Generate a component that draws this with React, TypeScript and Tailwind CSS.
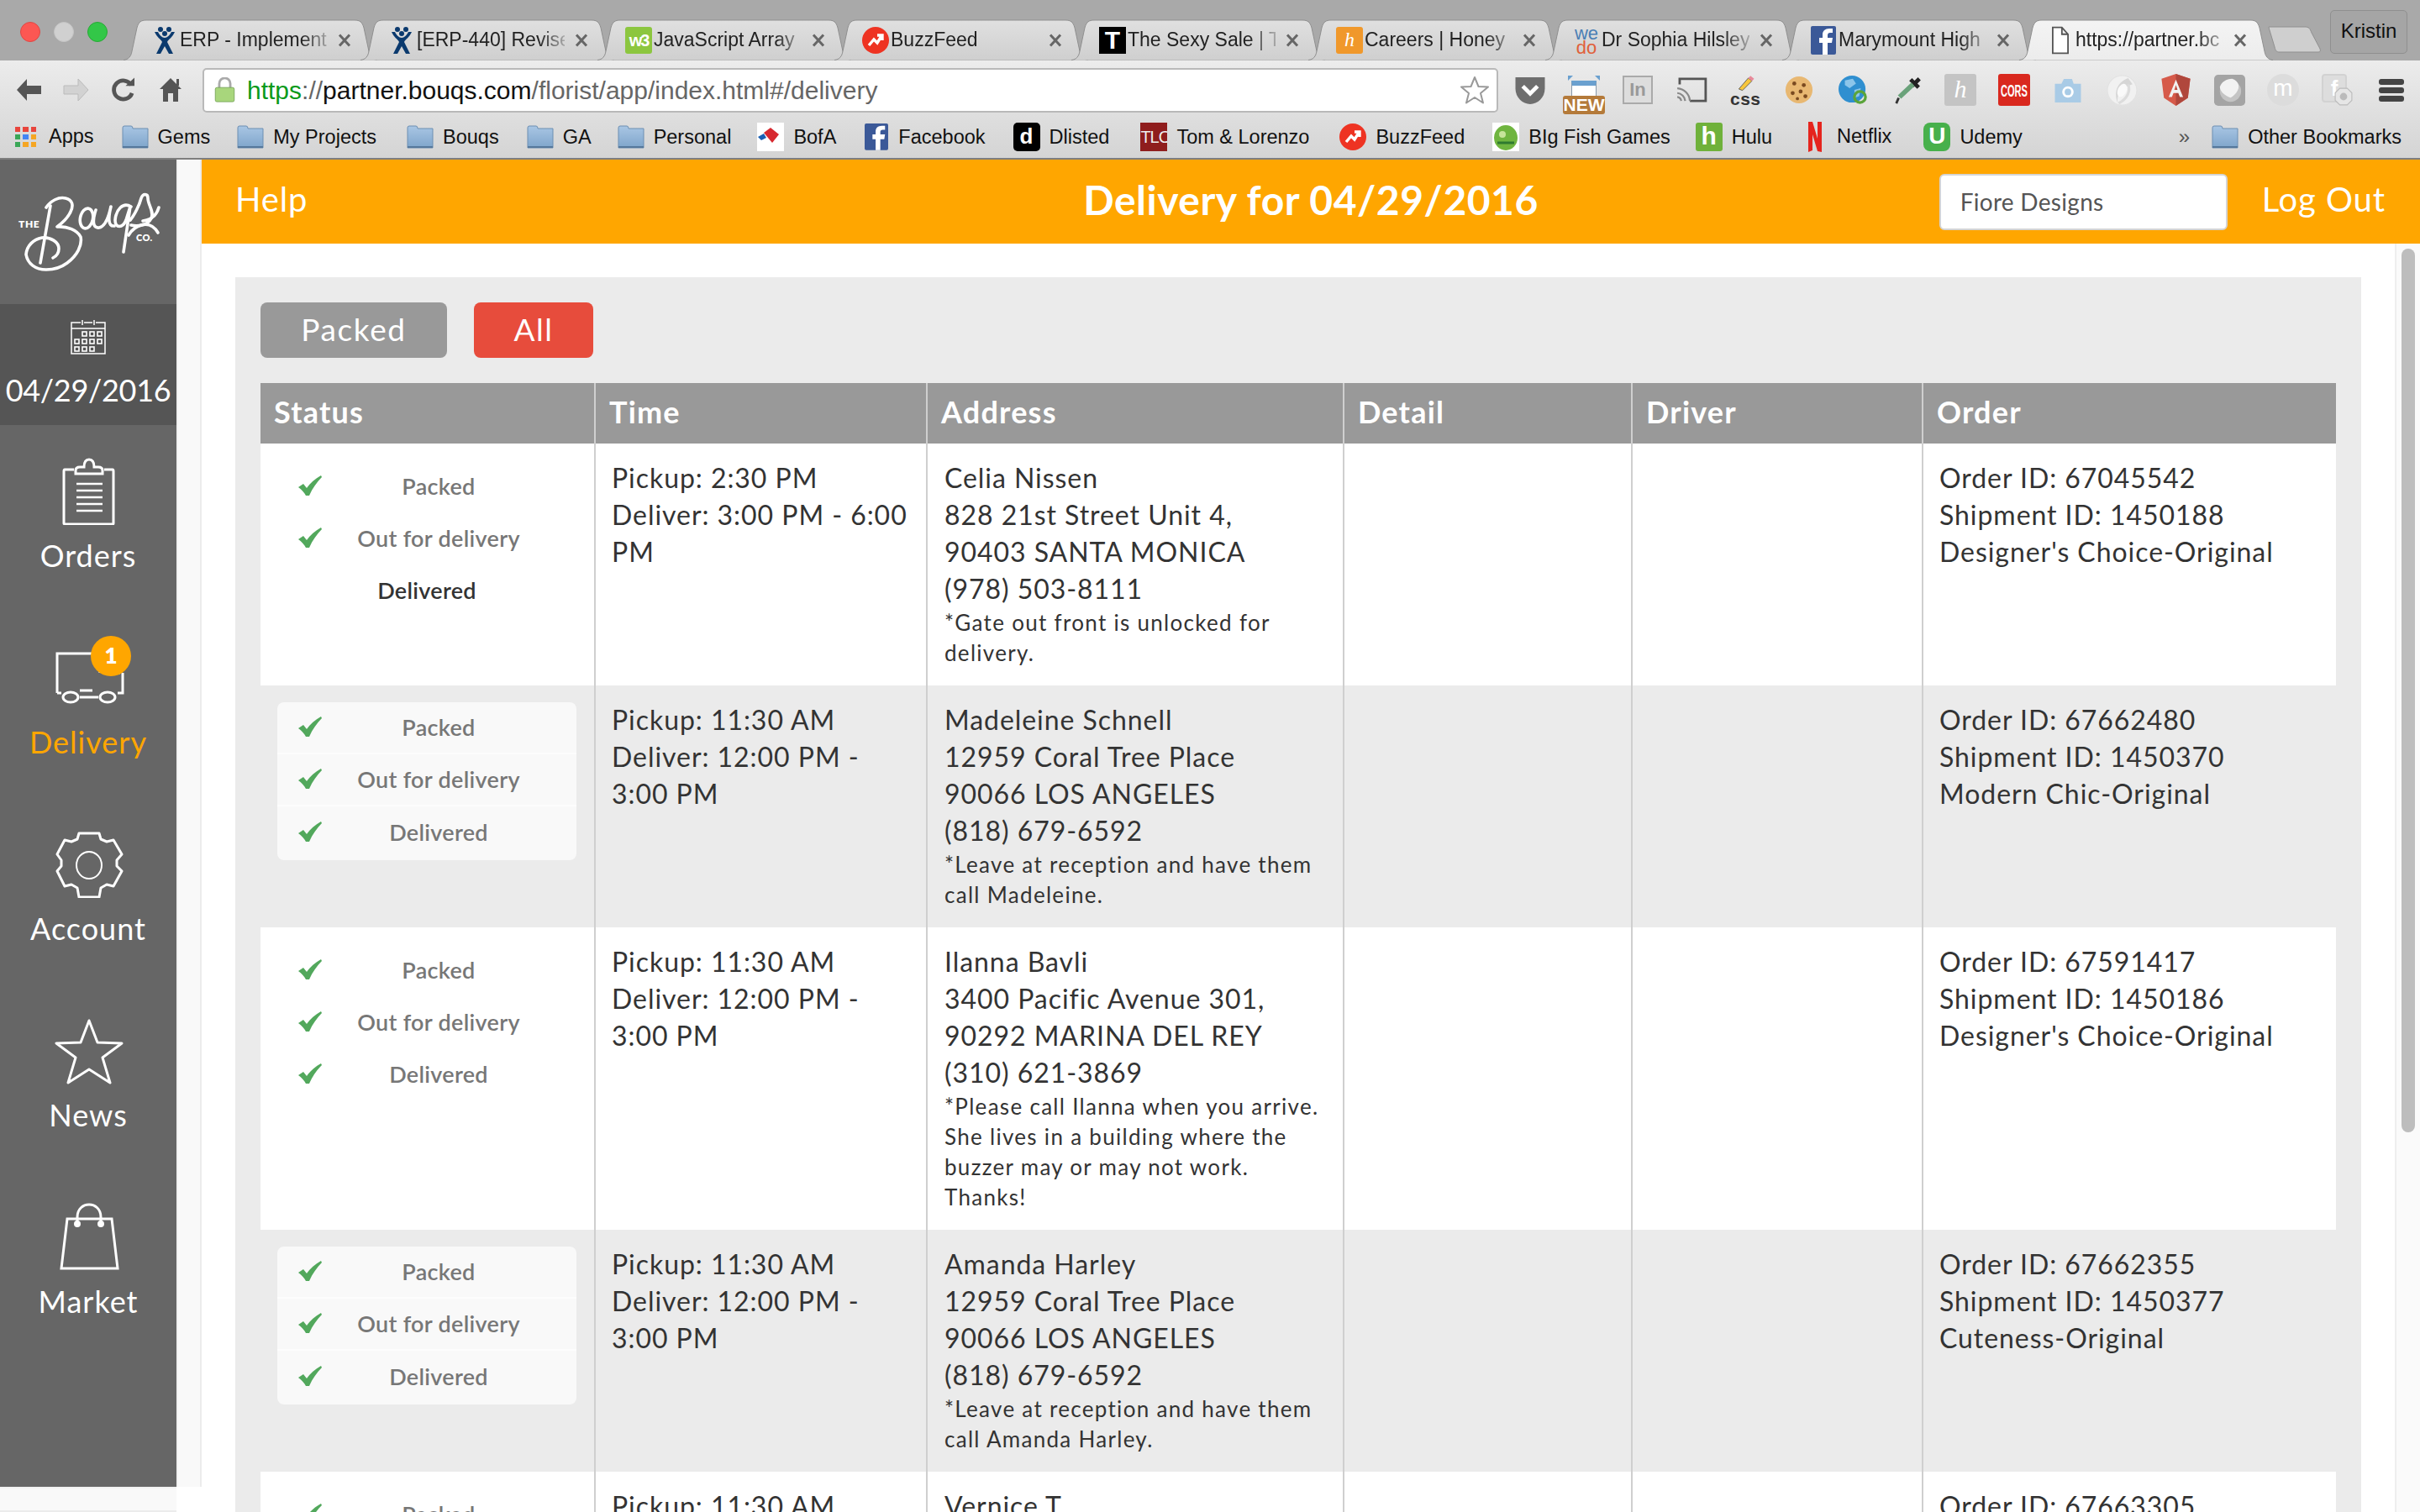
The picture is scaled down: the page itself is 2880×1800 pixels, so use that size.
import React from "react";

const FONT = "font-['Lato','Liberation_Sans',sans-serif]";
const UI = "font-['Liberation_Sans',sans-serif]";

/* ---------- favicons ---------- */
const Jira = () => (
  <svg viewBox="0 0 26 34" className="w-[26px] h-[34px]">
    <circle cx="8" cy="4" r="3" fill="#0b3a6e" />
    <circle cx="18" cy="4" r="3" fill="#0b3a6e" />
    <circle cx="13" cy="9" r="3" fill="#0b3a6e" />
    <path d="M1 7 C4 14 8 15 10 19 L3 33 L8 33 L13 24 L18 33 L23 33 L16 19 C18 15 22 14 25 7 L21 7 C19 11 16 14 13 14 C10 14 7 11 5 7Z" fill="#0b3a6e" />
  </svg>
);
const W3 = () => (
  <span className="w-[32px] h-[32px] rounded-[3px] bg-[#8cc63f] text-white text-[20px] font-bold leading-[32px] text-center tracking-[-2px] block">w3</span>
);
const Buzz = () => (
  <svg viewBox="0 0 32 32" className="w-[32px] h-[32px] block">
    <circle cx="16" cy="16" r="16" fill="#ee3322" />
    <path d="M8 22 L14 15 L18 19 L23 11 M18 10 L24 10 L24 16" stroke="#fff" strokeWidth="3.4" fill="none" />
  </svg>
);
const TBox = () => (
  <span className="w-[32px] h-[32px] bg-black text-white text-[30px] font-bold leading-[32px] text-center block">T</span>
);
const Honey = () => (
  <span className="w-[32px] h-[32px] rounded-[3px] bg-[#f0982b] text-white text-[24px] italic leading-[30px] text-center block font-['Liberation_Serif',serif]">h</span>
);
const WeDo = () => (
  <span className="w-[32px] h-[34px] text-[22px] leading-[17px] text-center block">
    <span className="text-[#4a7fb5] block">we</span>
    <span className="text-[#e0603a] block">do</span>
  </span>
);
const Fb = ({ s = 30 }: { s?: number }) => (
  <svg viewBox="0 0 30 34" className="block" style={{ width: s, height: (s * 34) / 30 }}>
    <rect width="30" height="34" rx="2" fill="#3b5998" />
    <path d="M20 34 V20 H25 L26 14 H20 V11 C20 9 21 8 23 8 H26 V3 H22 C17 3 14 6 14 10 V14 H10 V20 H14 V34Z" fill="#fff" />
  </svg>
);
const Doc = () => (
  <svg viewBox="0 0 22 36" className="w-[20px] h-[36px] block">
    <path d="M1 1 H13 L21 10 V35 H1Z M13 1 V10 H21" fill="#fff" stroke="#555" strokeWidth="2" />
  </svg>
);
const Folder = () => (
  <svg viewBox="0 0 32 28" className="w-[32px] h-[28px] block shrink-0">
    <defs>
      <linearGradient id="fold" x1="0" y1="0" x2="0" y2="1">
        <stop offset="0" stopColor="#a9c6e4" />
        <stop offset="1" stopColor="#7fa5cb" />
      </linearGradient>
    </defs>
    <path d="M1 3 Q1 1 3 1 H11 Q13 1 13 4 H31 V27 H1Z" fill="url(#fold)" stroke="#6d8fb2" strokeWidth="1" />
    <rect x="1" y="25" width="30" height="2" fill="#55789c" />
  </svg>
);
const Apps = () => {
  const c = ["#e8453c", "#e8453c", "#e8453c", "#3aa757", "#4285f4", "#f5a623", "#3aa757", "#f5a623", "#f5a623"];
  return (
    <span className="grid grid-cols-3 gap-[3px] w-[25px] shrink-0">
      {c.map((b, i) => (
        <span key={i} className="h-[6px] block" style={{ background: b }} />
      ))}
    </span>
  );
};

/* ---------- tab ---------- */
const tabs = [
  { icon: <Jira />, t: "ERP - Implement" },
  { icon: <Jira />, t: "[ERP-440] Revise" },
  { icon: <W3 />, t: "JavaScript Array" },
  { icon: <Buzz />, t: "BuzzFeed" },
  { icon: <TBox />, t: "The Sexy Sale | T" },
  { icon: <Honey />, t: "Careers | Honey" },
  { icon: <WeDo />, t: "Dr Sophia Hilsley" },
  { icon: <Fb />, t: "Marymount High" },
];

function Tab({ icon, t, active }: { icon: React.ReactNode; t: string; active?: boolean }) {
  return (
    <div className="relative w-[302px] h-[49px] -mr-[20px] shrink-0 flex items-center pl-[33px] pr-[31px]">
      <svg viewBox="0 0 302 49" className="absolute inset-0 w-full h-full" preserveAspectRatio="none">
        <defs>
          <linearGradient id="tabA" x1="0" y1="0" x2="0" y2="1">
            <stop offset="0" stopColor="#f4f4f4" />
            <stop offset="1" stopColor="#ececec" />
          </linearGradient>
          <linearGradient id="tabI" x1="0" y1="0" x2="0" y2="1">
            <stop offset="0" stopColor="#e0e0e0" />
            <stop offset="1" stopColor="#cfcfcf" />
          </linearGradient>
        </defs>
        <path
          d="M0 48.5 C6 48 9 44 10 38 L16 10 C18 3 21 1 27 1 H275 C281 1 284 3 286 10 L292 38 C293 44 296 48 302 48.5"
          fill={active ? "url(#tabA)" : "url(#tabI)"}
          stroke="#8f8f8f"
          strokeWidth="1"
        />
      </svg>
      <span className="relative w-[32px] h-[34px] shrink-0 flex items-center justify-center">{icon}</span>
      <span className={`relative ml-[2px] flex-1 overflow-hidden whitespace-nowrap text-[23px] text-[#222] ${UI} [mask-image:linear-gradient(to_right,black_82%,rgba(0,0,0,0.25))]`}>
        {t}
      </span>
      <span className="relative w-[16px] ml-[12px] shrink-0">
        <svg viewBox="0 0 16 16" className="w-[16px] h-[16px] block">
          <path d="M2 1.5 L14 14.5 M14 1.5 L2 14.5" stroke="#666" strokeWidth="3" />
        </svg>
      </span>
    </div>
  );
}

/* ---------- toolbar ---------- */
function Extensions() {
  return (
    <div className="flex items-center ml-[19px]">
      <svg viewBox="0 0 38 36" className="w-[38px] h-[35px] shrink-0">
        <path d="M1 2 H37 V16 C37 27 28 35 19 35 C10 35 1 27 1 16Z" fill="#6e6e6e" />
        <path d="M10 13 L19 22 L28 13" stroke="#fff" strokeWidth="5" fill="none" />
      </svg>
      <span className="relative w-[50px] h-[46px] ml-[20px] mt-[12px] shrink-0">
        <span className="absolute left-[6px] top-0 w-0 h-0 border-l-[6px] border-l-[#6aa0cf] border-b-[6px] border-b-transparent" />
        <span className="absolute right-[6px] top-0 w-0 h-0 border-r-[6px] border-r-[#6aa0cf] border-b-[6px] border-b-transparent" />
        <span className="absolute left-[10px] top-[6px] w-[30px] h-[20px] bg-white border border-[#89a] border-t-[6px] border-t-[#6aa0cf]" />
        <span className="absolute left-0 bottom-0 w-[50px] h-[22px] bg-[#b47a3a] rounded-[3px] text-white text-[21px] font-bold leading-[22px] text-center">NEW</span>
      </span>
      <span className="w-[36px] h-[34px] ml-[21px] border-2 border-[#aaa] bg-[#ddd] text-[#999] text-[22px] leading-[30px] text-center shrink-0 font-bold">In</span>
      <svg viewBox="0 0 40 32" className="w-[38px] h-[30px] shrink-0 ml-[27px]">
        <path d="M5 9 V2 H38 V30 H18" stroke="#555" strokeWidth="3" fill="none" />
        <path d="M2 14 A17 17 0 0 1 18 30 M2 20 A11 11 0 0 1 12 30 M2 25 A6 6 0 0 1 7 30" stroke="#888" strokeWidth="2.4" fill="none" />
      </svg>
      <span className="relative w-[36px] h-[36px] shrink-0 ml-[27px]">
        <svg viewBox="0 0 30 20" className="absolute left-[6px] top-0 w-[26px] h-[20px]">
          <path d="M5 18 L18 3 L23 7 L10 20Z" fill="#f7c63c" stroke="#555" strokeWidth="1" />
          <path d="M18 3 L21 0 L26 4 L23 7Z" fill="#e88a9a" />
        </svg>
        <span className="absolute left-0 bottom-[-2px] w-[36px] text-center text-[21px] font-bold text-[#333] leading-[18px] tracking-[0.5px]">css</span>
      </span>
      <svg viewBox="0 0 36 36" className="w-[34px] h-[34px] shrink-0 ml-[29px]">
        <circle cx="18" cy="18" r="17" fill="#e8b872" />
        <circle cx="12" cy="10" r="2.5" fill="#7a4a20" />
        <circle cx="24" cy="12" r="2.5" fill="#7a4a20" />
        <circle cx="10" cy="22" r="2.5" fill="#7a4a20" />
        <circle cx="20" cy="20" r="2.5" fill="#7a4a20" />
        <circle cx="26" cy="26" r="2.5" fill="#7a4a20" />
        <circle cx="16" cy="29" r="2" fill="#7a4a20" />
      </svg>
      <svg viewBox="0 0 36 36" className="w-[36px] h-[34px] shrink-0 ml-[29px]">
        <circle cx="17" cy="17" r="17" fill="#2f8fd0" />
        <path d="M8 6 L18 4 L22 10 L14 16 L8 12Z M20 18 L28 16 L26 26 L20 28Z" fill="#8cc5ea" />
        <circle cx="27" cy="27" r="7" fill="none" stroke="#5aa43a" strokeWidth="3.5" />
      </svg>
      <svg viewBox="0 0 36 38" className="w-[36px] h-[36px] shrink-0 ml-[29px]">
        <path d="M24 14 L33 5 M22 6 L32 16" stroke="#222" strokeWidth="5" />
        <path d="M25 12 L8 28" stroke="#6aa27a" strokeWidth="6" />
        <path d="M7 29 L4 36" stroke="#333" strokeWidth="3" />
      </svg>
      <span className="w-[38px] h-[38px] bg-[#c4c4c4] rounded-[3px] text-white text-[30px] leading-[36px] italic text-center shrink-0 ml-[26px] font-['Liberation_Serif',serif]">h</span>
      <svg viewBox="0 0 38 38" className="w-[38px] h-[38px] shrink-0 ml-[26px]">
        <rect width="38" height="38" rx="3" fill="#d9281e" />
        <text x="3" y="27" fontSize="21" fontWeight="700" fill="#fff" textLength="32" lengthAdjust="spacingAndGlyphs" fontFamily="Liberation Sans">CORS</text>
      </svg>
      <svg viewBox="0 0 34 32" className="w-[34px] h-[31px] shrink-0 ml-[28px]">
        <path d="M1 8 H9 L12 2 H22 L24 8 H33 V31 H1Z" fill="#a9cbe6" />
        <circle cx="17" cy="18" r="7" fill="#fff" />
        <circle cx="17" cy="18" r="4" fill="#a9cbe6" />
      </svg>
      <svg viewBox="0 0 36 36" className="w-[37px] h-[37px] shrink-0 ml-[29px]">
        <circle cx="18" cy="18" r="17" fill="#f1f1f1" stroke="#e2e2e2" />
        <path d="M25 4 C12 9 8 20 13 33 C11 23 17 15 30 11Z" fill="#d6d6d6" />
        <path d="M25 11 C28 19 24 28 14 33" stroke="#dcdcdc" strokeWidth="3" fill="none" />
        <ellipse cx="18" cy="18" rx="5" ry="8" fill="#fafafa" transform="rotate(25 18 18)" />
      </svg>
      <svg viewBox="0 0 36 40" className="w-[35px] h-[38px] shrink-0 ml-[28px]">
        <path d="M18 0 L36 6 L33 30 L18 40 L3 30 L0 6Z" fill="#d65a4a" />
        <path d="M18 0 L36 6 L33 30 L18 40Z" fill="#b0473c" />
        <path d="M18 7 L9 29 H13 L15 24 H21 L23 29 H27Z M16 20 L18 14 L20 20Z" fill="#f2f2f2" />
      </svg>
      <svg viewBox="0 0 38 38" className="w-[37px] h-[37px] shrink-0 ml-[28px]">
        <rect width="38" height="38" rx="5" fill="#a4a4a4" />
        <circle cx="20" cy="20" r="13" fill="#c4c4c4" />
        <path d="M22 5 C31 8 32 16 27 22 C24 26 20 28 20 28 C13 26 7 20 7 15 C9 9 15 5 22 5Z" fill="#f2f2f2" />
      </svg>
      <span className="w-[38px] h-[38px] rounded-full bg-[#dcdcdc] text-white text-[28px] leading-[34px] text-center shrink-0 ml-[26px]">m</span>
      <span className="relative w-[37px] h-[38px] shrink-0 ml-[27px]">
        <span className="absolute left-0 top-0 w-[30px] h-[34px] rounded-[4px] bg-[#ddd] border-2 border-[#d2d2d2] text-white text-[26px] font-bold leading-[30px] text-center">f</span>
        <svg viewBox="0 0 20 20" className="absolute right-0 bottom-0 w-[22px] h-[22px]">
          <path d="M6 1 H14 L19 6 V14 L14 19 H6 L1 14 V6Z" fill="#e6e6e6" stroke="#bbb" />
          <circle cx="10" cy="10" r="4" fill="#bbb" />
        </svg>
      </span>
      <span className="flex flex-col gap-[3px] w-[30px] shrink-0 ml-[31px]">
        <span className="h-[7px] rounded-[3px] bg-[#444] block" />
        <span className="h-[7px] rounded-[3px] bg-[#444] block" />
        <span className="h-[7px] rounded-[3px] bg-[#444] block" />
      </span>
    </div>
  );
}

const Bm = ({ icon, t, w, cls = "" }: { icon: React.ReactNode; t: string; w?: number; cls?: string }) => (
  <span className={`flex items-center shrink-0 gap-[11px] ${cls}`}>
    <span className="flex items-center justify-center shrink-0" style={{ width: w ?? 32 }}>{icon}</span>
    <span className="text-[23.5px] text-[#111] whitespace-nowrap leading-[32px]">{t}</span>
  </span>
);

function Chrome() {
  return (
    <div className={`h-[190px] shrink-0 bg-[#a9a9a9] flex flex-col ${UI}`}>
      <div className="h-[72px] shrink-0 flex items-end pl-[147px] relative">
        <div className="flex items-end">
          {tabs.map((t, i) => (
            <Tab key={i} icon={t.icon} t={t.t} />
          ))}
          <Tab icon={<Doc />} t="https://partner.bc" active />
        </div>
        <svg viewBox="0 0 66 32" className="w-[66px] h-[32px] self-start mt-[31px] ml-[14px] shrink-0">
          <path d="M1 1 H44 C49 1 50 3 52 8 L62 27 C63 30 62 31 60 31 H14 C10 31 9 29 8 25 L2 5 C1 2 1 1 1 1Z" fill="#cfcfcf" stroke="#8f8f8f" />
        </svg>
        <span className="absolute left-[2773px] top-[12px] w-[92px] h-[52px] rounded-[5px] bg-[#a5a5a5] border border-[#8f8f8f] text-[24px] text-[#111] text-center leading-[48px]">Kristin</span>
        <span className="absolute left-[24px] top-[26px] w-[24px] h-[24px] rounded-full bg-[#fc5753] border border-[#df4744]" />
        <span className="absolute left-[64px] top-[26px] w-[24px] h-[24px] rounded-full bg-[#d0d0d0] border border-[#c4c4c4]" />
        <span className="absolute left-[104px] top-[26px] w-[24px] h-[24px] rounded-full bg-[#33c748] border border-[#27aa35]" />
      </div>
      <div className="flex-1 bg-gradient-to-b from-[#ececec] to-[#d4d4d4] border-b-2 border-[#7e7e7e] flex flex-col">
        <div className="h-[66px] shrink-0 flex items-center pt-[4px]">
          <div className="flex items-center ml-[18px] shrink-0">
            <svg viewBox="0 0 32 30" className="w-[32px] h-[30px] block">
              <path d="M14 2 L2 15 L14 28 V20 H31 V10 H14Z" fill="#555" />
            </svg>
            <svg viewBox="0 0 32 30" className="w-[32px] h-[30px] block ml-[25px]">
              <path d="M18 2 L30 15 L18 28 V20 H1 V10 H18Z" fill="#d2d2d2" stroke="#bbb" />
            </svg>
            <svg viewBox="0 0 28 30" className="w-[27px] h-[30px] block ml-[26px]">
              <path d="M24 9 A11.5 11.5 0 1 0 25 19" fill="none" stroke="#555" strokeWidth="5" />
              <path d="M17 10 H28 V0Z" fill="#555" />
            </svg>
            <svg viewBox="0 0 26 30" className="w-[26px] h-[30px] block ml-[30px]">
              <path d="M13 1 L26 14 H22 V29 H16 V19 H10 V29 H4 V14 H0Z" fill="#555" />
              <rect x="20" y="2" width="3" height="8" fill="#555" />
            </svg>
          </div>
          <div className="ml-[25px] w-[1542px] h-[53px] shrink-0 rounded-[5px] bg-white border-2 border-[#b9b9b9] flex items-center pl-[12px] pr-[8px]">
            <svg viewBox="0 0 26 32" className="w-[25px] h-[30px] shrink-0">
              <path d="M6 14 V8 A7 7 0 0 1 20 8 V14" fill="none" stroke="#aaa" strokeWidth="3" />
              <rect x="1" y="13" width="24" height="18" rx="2" fill="#a8d67c" stroke="#7aa85a" />
            </svg>
            <span className="ml-[14px] text-[30px] text-[#666] whitespace-nowrap">
              <span className="text-[#0a9a1a]">https</span>:
              <span className="text-[#666]">//</span>
              <span className="text-[#111]">partner.bouqs.com</span>/florist/app/index.html#/delivery
            </span>
            <svg viewBox="0 0 36 34" className="w-[36px] h-[34px] ml-auto shrink-0">
              <path d="M18 2 L22.5 13 L34 13.5 L25 21 L28 32.5 L18 26 L8 32.5 L11 21 L2 13.5 L13.5 13Z" fill="#fff" stroke="#999" strokeWidth="2" strokeLinejoin="round" />
            </svg>
          </div>
          <Extensions />
        </div>
        <div className="flex-1 flex items-center gap-[33px] pl-[18px] pr-[22px]">
          <span className="flex items-center gap-[15px] shrink-0">
            <Apps />
            <span className="text-[23.5px] text-[#111]">Apps</span>
          </span>
          <Bm icon={<Folder />} t="Gems" />
          <Bm icon={<Folder />} t="My Projects" cls="-ml-[1px]" />
          <Bm icon={<Folder />} t="Bouqs" cls="ml-[3px]" />
          <Bm icon={<Folder />} t="GA" />
          <Bm icon={<Folder />} t="Personal" cls="-ml-[2px]" />
          <Bm
            icon={
              <svg viewBox="0 0 32 34" className="w-[32px] h-[34px]">
                <rect width="32" height="34" fill="#fff" />
                <path d="M8 12 L16 6 L26 14 L18 24Z" fill="#d7282f" />
                <path d="M1 17 L8 13 L11 18 L5 21Z" fill="#1a5fb4" />
              </svg>
            }
            t="BofA"
            cls="-ml-[2px]"
          />
          <Bm icon={<Fb s={28} />} t="Facebook" w={30} />
          <Bm
            icon={<span className="w-[32px] h-[34px] bg-black rounded-[5px] text-white text-[26px] font-bold leading-[32px] text-center block">d</span>}
            t="Dlisted"
          />
          <Bm
            icon={<span className="w-[32px] h-[34px] bg-[#8f1d1d] text-[#eee] text-[20px] leading-[34px] text-center block tracking-[-1px] overflow-hidden">TLO</span>}
            t="Tom & Lorenzo"
            cls="ml-[4px]"
          />
          <Bm icon={<Buzz />} t="BuzzFeed" cls="ml-[3px]" />
          <Bm
            icon={
              <svg viewBox="0 0 32 34" className="w-[32px] h-[34px]">
                <rect width="32" height="34" fill="#fff" />
                <ellipse cx="16" cy="18" rx="14" ry="15" fill="#6fb53f" />
                <circle cx="12" cy="14" r="4" fill="#c6e59a" />
                <path d="M6 24 H26" stroke="#2f7a2f" strokeWidth="3" />
              </svg>
            }
            t="BIg Fish Games"
          />
          <Bm
            icon={<span className="w-[32px] h-[34px] bg-[#6fb13a] rounded-[3px] text-white text-[30px] font-bold leading-[32px] text-center block">h</span>}
            t="Hulu"
            cls="-ml-[3px]"
          />
          <span className="flex items-center gap-[18px] shrink-0 ml-[10px]">
            <svg viewBox="0 0 16 36" className="w-[16px] h-[36px]">
              <path d="M0 0 H5 L11 20 V0 H16 V36 L11 35 L5 15 V34 L0 36Z" fill="#e5241d" />
            </svg>
            <span className="text-[23.5px] text-[#111]">Netflix</span>
          </span>
          <Bm
            icon={
              <span className="w-[32px] h-[34px] bg-[#47b04b] rounded-[8px] text-white text-[28px] font-bold leading-[32px] text-center block">U</span>
            }
            t="Udemy"
            cls="ml-[5px]"
          />
          <span className="ml-auto text-[24px] text-[#555] mr-[-5px]">»</span>
          <Bm icon={<Folder />} t="Other Bookmarks" cls="-ml-[2px]" />
        </div>
      </div>
    </div>
  );
}

/* ---------- sidebar ---------- */
const Logo = () => (
  <svg viewBox="0 0 210 172" className="w-[210px] h-[172px] block">
    <g fill="none" stroke="#fff" strokeWidth="3.6" strokeLinecap="round" strokeLinejoin="round">
      <path d="M48 123 C52 100 56 78 60 55" />
      <path d="M55 57 C60 49 70 44 78 46 C86 48 88 54 84 62 C81 69 76 74 68 80 C80 79 92 84 96 92 C98 102 92 114 80 123 C72 129 62 131 55 131 C42 131 33 124 31 113 C32 102 40 95 50 93 C60 92 70 98 70 106 C70 111 67 115 63 117" />
      <ellipse cx="103" cy="70" rx="7.5" ry="12" transform="rotate(12 103 70)" />
      <path d="M114 60 C110 72 110 82 118 81 C124 80 129 70 132 56 C129 68 128 80 136 79" />
      <path d="M156 56 C146 50 138 60 137 72 C137 82 146 82 150 72 L155 56 L147 110" />
      <path d="M155 72 C160 66 166 54 168 46 C170 40 176 40 176 46 C176 54 184 62 180 70 C176 78 164 80 156 78" />
      <path d="M189 57 C186 68 178 72 170 73" />
      <path d="M153 90 C160 78 178 70 188 87" />
    </g>
    <text x="22" y="81" fill="#fff" fontSize="12" fontWeight="800" fontFamily="Lato" letterSpacing="0.6">THE</text>
    <text x="162" y="97" fill="#fff" fontSize="11" fontWeight="800" fontFamily="Lato" letterSpacing="0.4">CO.</text>
  </svg>
);

const navSvg = "w-[100px] h-[96px] block mx-auto";
const IconOrders = () => (
  <svg viewBox="0 0 100 96" className={navSvg} fill="none" stroke="#fff" strokeWidth="3">
    <path d="M33 30 H22 Q21 30 21 32 V94 Q21 95 23 95 H79 Q80 95 80 94 V32 Q80 30 79 30 H69" />
    <path d="M35 35 V31 Q35 27 40 27 H45 Q45 18 51 18 Q57 18 57 27 H62 Q67 27 67 31 V35Z" />
    <path d="M36 47 H67 M36 55 H67 M36 63 H67 M36 71 H67 M36 79 H67" strokeWidth="2.4" />
  </svg>
);
const IconTruck = () => (
  <svg viewBox="0 0 100 96" className={navSvg} fill="none" stroke="#fff" strokeWidth="3">
    <path d="M13 74 V27 H57 M64 27 V50 M13 74 H18" />
    <path d="M70 36 H82 L86 50 H70Z" />
    <path d="M91 50 V74 H85" />
    <ellipse cx="29" cy="79" rx="9" ry="6" />
    <ellipse cx="73" cy="79" rx="9" ry="6" />
    <path d="M40 71 H55 M40 79 H62" />
  </svg>
);
const IconGear = () => (
  <svg viewBox="0 0 100 96" className={navSvg} fill="none" stroke="#fff" strokeWidth="3">
    <path d="M39 19 H63 L65 26 L72 29 L80 27 L90 44 L84 51 V58 L90 64 L80 82 L72 80 L65 84 L63 95 H39 L37 84 L30 80 L22 82 L13 64 L18 58 V51 L13 44 L22 27 L30 29 L37 26Z" strokeLinejoin="round" />
    <ellipse cx="51" cy="57" rx="15" ry="16" strokeWidth="2" />
  </svg>
);
const IconStar = () => (
  <svg viewBox="0 0 100 96" className={navSvg} fill="none" stroke="#fff" strokeWidth="3" strokeLinejoin="round">
    <path d="M51 20 L61 46 L90 47 L67 64 L76 94 L51 78 L26 94 L35 64 L12 47 L41 46Z" />
  </svg>
);
const IconBag = () => (
  <svg viewBox="0 0 100 96" className={navSvg} fill="none" stroke="#fff" strokeWidth="3">
    <path d="M25 34 H78 L85 93 H18Z" />
    <path d="M37 40 V32 C37 12 65 12 65 32 V40" />
    <circle cx="37" cy="40" r="2.5" fill="#fff" />
    <circle cx="65" cy="40" r="2.5" fill="#fff" />
  </svg>
);

const NavItem = ({ icon, label, active, badge }: { icon: React.ReactNode; label: string; active?: boolean; badge?: boolean }) => (
  <div className="h-[222px] pt-[23px] text-center relative">
    {icon}
    {badge && (
      <span className="absolute left-[108px] top-[29px] w-[48px] h-[48px] rounded-full bg-[#ffa600] text-white font-extrabold text-[26px] leading-[46px]">1</span>
    )}
    <div className={`mt-[14px] text-[36px] leading-[44px] tracking-[1px] ${active ? "text-[#ffa600]" : "text-white"}`}>{label}</div>
  </div>
);

function Sidebar() {
  return (
    <div className="w-[240px] shrink-0 flex flex-col">
      <div className="flex h-[1580px] shrink-0">
        <div className="w-[210px] bg-[#666] text-white">
          <Logo />
          <div className="h-[144px] bg-[#555] text-center pt-[18px]">
            <svg viewBox="0 0 42 42" className="w-[42px] h-[42px] mx-auto block" fill="none" stroke="#fff" strokeWidth="1.5">
              <path d="M12 4 H1 V41 H41 V4 H30 M16 4 H26 M14 1 V7 M28 1 V7 M1 11 H41" />
              {[
                [14, 15], [23, 15], [32, 15], [5, 24], [14, 24], [23, 24], [32, 24], [5, 33], [14, 33], [23, 33],
              ].map(([x, y], i) => (
                <rect key={i} x={x} y={y} width="5" height="5" strokeWidth="1.6" />
              ))}
            </svg>
            <div className="mt-[20px] text-[36px] leading-[44px] tracking-[-0.3px] whitespace-nowrap">04/29/2016</div>
          </div>
          <NavItem icon={<IconOrders />} label="Orders" />
          <NavItem icon={<IconTruck />} label="Delivery" active badge />
          <NavItem icon={<IconGear />} label="Account" />
          <NavItem icon={<IconStar />} label="News" />
          <NavItem icon={<IconBag />} label="Market" />
        </div>
        <div className="w-[30px] bg-[#f9f9f9] border-l-2 border-l-[#f0f0f0] border-r-2 border-r-[#ececec]" />
      </div>
      <div className="h-[30px] w-[210px] bg-[#f9f9f9] border-t-2 border-t-[#f2f2f2] border-b-2 border-b-[#ececec]" />
    </div>
  );
}

/* ---------- table ---------- */
const Check = () => (
  <svg viewBox="0 0 28 24" className="w-[28px] h-[24px] shrink-0 block -mt-[3px]">
    <path d="M0 14 L6 10 L10 15 C14 9 20 4 27 0 L28 2 C22 8 17 15 13 24 L9 24 C7 20 4 17 0 14Z" fill="#52a85c" />
  </svg>
);

function StatusRow({ label, done, dark }: { label: string; done: boolean; dark?: boolean }) {
  return (
    <div className="h-[62px] flex items-center">
      {done && (
        <span className="w-[28px] ml-[25px] mr-[-25px] shrink-0 relative z-[1]">
          <Check />
        </span>
      )}
      <span className={`flex-1 text-center text-[27px] font-semibold tracking-[0.3px] ${dark ? "text-[#333]" : "text-[#777]"}`}>
        {label}
      </span>
    </div>
  );
}

type Row = {
  status: boolean[];
  time: string[];
  addr: string[];
  note: string[];
  order: string[];
};
const rows: Row[] = [
  {
    status: [true, true, false],
    time: ["Pickup: 2:30 PM", "Deliver: 3:00 PM - 6:00", "PM"],
    addr: ["Celia Nissen", "828 21st Street Unit 4,", "90403 SANTA MONICA", "(978) 503-8111"],
    note: ["*Gate out front is unlocked for", "delivery."],
    order: ["Order ID: 67045542", "Shipment ID: 1450188", "Designer's Choice-Original"],
  },
  {
    status: [true, true, true],
    time: ["Pickup: 11:30 AM", "Deliver: 12:00 PM -", "3:00 PM"],
    addr: ["Madeleine Schnell", "12959 Coral Tree Place", "90066 LOS ANGELES", "(818) 679-6592"],
    note: ["*Leave at reception and have them", "call Madeleine."],
    order: ["Order ID: 67662480", "Shipment ID: 1450370", "Modern Chic-Original"],
  },
  {
    status: [true, true, true],
    time: ["Pickup: 11:30 AM", "Deliver: 12:00 PM -", "3:00 PM"],
    addr: ["Ilanna Bavli", "3400 Pacific Avenue 301,", "90292 MARINA DEL REY", "(310) 621-3869"],
    note: ["*Please call Ilanna when you arrive.", "She lives in a building where the", "buzzer may or may not work.", "Thanks!"],
    order: ["Order ID: 67591417", "Shipment ID: 1450186", "Designer's Choice-Original"],
  },
  {
    status: [true, true, true],
    time: ["Pickup: 11:30 AM", "Deliver: 12:00 PM -", "3:00 PM"],
    addr: ["Amanda Harley", "12959 Coral Tree Place", "90066 LOS ANGELES", "(818) 679-6592"],
    note: ["*Leave at reception and have them", "call Amanda Harley."],
    order: ["Order ID: 67662355", "Shipment ID: 1450377", "Cuteness-Original"],
  },
  {
    status: [true],
    time: ["Pickup: 11:30 AM"],
    addr: ["Vernice T"],
    note: [],
    order: ["Order ID: 67663305"],
  },
];

const Lines = ({ l }: { l: string[] }) => (
  <>
    {l.map((t) => (
      <div key={t} className="text-[32px] leading-[44px] tracking-[0.95px] whitespace-nowrap">{t}</div>
    ))}
  </>
);
const labels = ["Packed", "Out for delivery", "Delivered"];
const GRID = "grid grid-cols-[399px_395px_496px_343px_346px_491px]";
const cell = "border-r-2 border-r-[#cfcfcf] last:border-r-0";

function DataRow({ r, i }: { r: Row; i: number }) {
  const odd = i % 2 === 1;
  return (
    <div className={`${GRID} text-[#333] ${odd ? "bg-[#ebebeb]" : "bg-white"}`}>
      <div className={`${cell} pt-[20px] pb-[20px] pl-[20px] pr-[21px]`}>
        <div className={`rounded-[8px] flex flex-col ${odd ? "bg-[#f9f9f9] pb-[2px] divide-y-2 divide-[#fdfdfd]" : ""}`}>
          {r.status.map((d, k) => (
            <StatusRow key={k} label={labels[k]} done={d} dark={!d} />
          ))}
        </div>
      </div>
      <div className={`${cell} pt-[19px] pl-[19px]`}><Lines l={r.time} /></div>
      <div className={`${cell} pt-[19px] pb-[21px] pl-[20px]`}>
        <Lines l={r.addr} />
        {r.note.map((t) => (
          <div key={t} className="text-[26px] leading-[36px] tracking-[1.3px] whitespace-nowrap">{t}</div>
        ))}
      </div>
      <div className={cell} />
      <div className={cell} />
      <div className="pt-[19px] pl-[19px]"><Lines l={r.order} /></div>
    </div>
  );
}

export default function App() {
  return (
    <div className={`w-[2880px] h-[1800px] overflow-hidden flex flex-col bg-white ${FONT}`}>
      <Chrome />
      <div className="flex-1 flex min-h-0">
        <Sidebar />
        <div className="flex-1 flex flex-col min-w-0">
          <header className="h-[100px] shrink-0 bg-[#ffa600] text-white grid grid-cols-[1fr_auto_1fr] items-center">
            <div className="pl-[40px] text-[40px] tracking-[0.8px] pb-[6px]">Help</div>
            <div className="text-[48px] font-bold tracking-[0.5px] pb-[4px]">Delivery for 04/29/2016</div>
            <div className="flex items-center justify-end pr-[41px]">
              <div className="w-[343px] h-[67px] rounded-[6px] bg-white border-2 border-[#d4d4d4] pl-[23px] text-[28px] leading-[63px] text-[#555] tracking-[0.3px]">Fiore Designs</div>
              <div className="ml-[41px] text-[40px] tracking-[0.9px] pb-[6px]">Log Out</div>
            </div>
          </header>
          <div className="flex-1 flex min-h-0">
            <main className="w-[2610px] shrink-0 pl-[40px] pr-[40px] pt-[40px] overflow-hidden">
              <div className="bg-[#ebebeb] px-[30px] pt-[30px] pb-[30px]">
                <div className="flex gap-[32px] mb-[30px]">
                  <button className="w-[222px] h-[66px] rounded-[8px] bg-[#999] text-white text-[37px] leading-[62px] pb-[2px] tracking-[1.6px]">Packed</button>
                  <button className="w-[142px] h-[66px] rounded-[8px] bg-[#e74c3c] text-white text-[37px] leading-[62px] pb-[2px] tracking-[1.6px]">All</button>
                </div>
                <div className={`${GRID} h-[72px] bg-[#999] text-white text-[36px] font-bold leading-[69px] tracking-[1.2px]`}>
                  {["Status", "Time", "Address", "Detail", "Driver", "Order"].map((h) => (
                    <div key={h} className="pl-[16px] border-r-2 border-r-[#cfcfcf] last:border-r-0">{h}</div>
                  ))}
                </div>
                {rows.map((r, i) => (
                  <DataRow key={i} r={r} i={i} />
                ))}
              </div>
            </main>
            <div className="w-[30px] shrink-0 bg-[#fafafa] border-l-2 border-l-[#eeeeee] pl-[6px] pt-[6px]">
              <div className="w-[16px] h-[1052px] rounded-full bg-[#bdbdbd]" />
            </div>
          </div>
        </div>
      </div>
    </div>
  );
}
